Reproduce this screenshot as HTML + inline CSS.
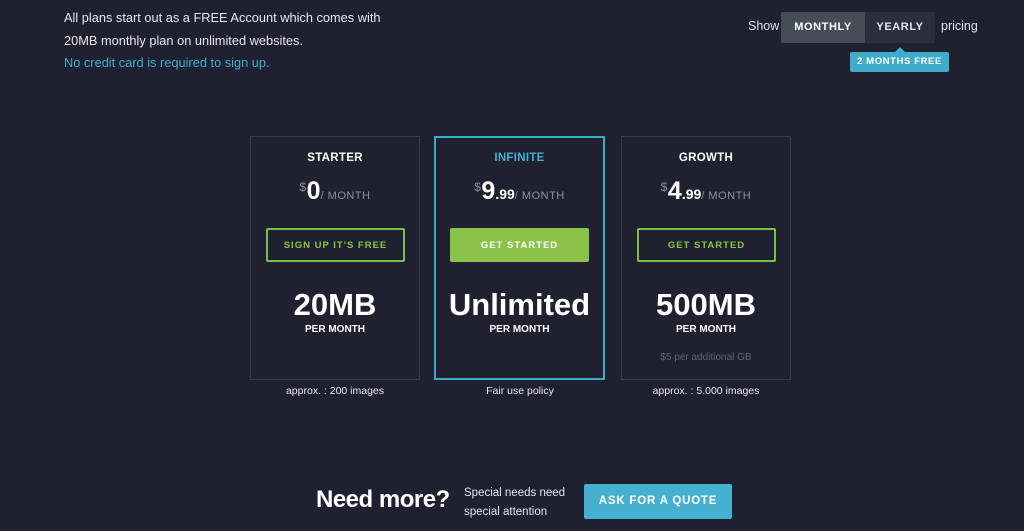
<!DOCTYPE html>
<html><head><style>
*{margin:0;padding:0;box-sizing:border-box}
body{width:1024px;height:531px;background:#1f2130;font-family:"Liberation Sans",sans-serif;color:#fff;position:relative;overflow:hidden}
.a{position:absolute}
.intro{left:64px;top:7px;font-size:12.8px;line-height:22.5px;color:#e8e9ec}
.intro .b{color:#3fb0d2}
.card{top:136px;width:170px;height:244px;border:1px solid #363a4a;text-align:center}
.card.inf{border:2px solid #39adc8}
.t{position:absolute;top:15px;left:0;right:0;font-size:11.5px;font-weight:bold;letter-spacing:.3px}
.p{position:absolute;top:40px;left:0;right:0;font-size:11px;color:#8d909b;letter-spacing:.5px}
.p sup{font-size:12px;vertical-align:8px}
.p b{font-size:25px;color:#fff;font-weight:bold;letter-spacing:0}
.p b small{font-size:14px}
.btn{position:absolute;top:91px;left:15px;width:139px;height:34px;border:2px solid #7cbf42;color:#8cc63f;font-size:9.5px;font-weight:bold;letter-spacing:1px;line-height:31px;border-radius:2px}
.btn.f{background:#8bc34a;color:#fff;border-color:#8bc34a}
.v{position:absolute;top:150px;left:0;right:0;font-size:31px;font-weight:bold}
.pm{position:absolute;top:187px;left:0;right:0;font-size:10px;font-weight:bold}
.ex{position:absolute;top:215px;left:0;right:0;font-size:10px;color:#5f6373}
.below{top:385px;width:170px;text-align:center;font-size:10.5px;color:#e8e9ec}
</style></head><body>
<div class="a intro">All plans start out as a FREE Account which comes with<br>20MB monthly plan on unlimited websites.<br><span class="b">No credit card is required to sign up.</span></div>
<div class="a" style="left:748px;top:19px;font-size:12.5px;color:#e0e2e6">Show</div>
<div class="a" style="left:781px;top:12px;width:84px;height:31px;background:#474d57;border-radius:2px 0 0 2px;font-size:11px;font-weight:bold;letter-spacing:.6px;line-height:31px;text-align:center">MONTHLY</div>
<div class="a" style="left:865px;top:12px;width:70px;height:31px;background:#2b2e3d;border-radius:0 2px 2px 0;font-size:11px;font-weight:bold;letter-spacing:.6px;line-height:31px;text-align:center;color:#e6e7ea">YEARLY</div>
<div class="a" style="left:941px;top:19px;font-size:12.5px;color:#e0e2e6">pricing</div>
<div class="a" style="left:895px;top:47px;width:0;height:0;border-left:5px solid transparent;border-right:5px solid transparent;border-bottom:5px solid #3fadc9"></div>
<div class="a" style="left:850px;top:52px;width:99px;height:20px;background:#3fadc9;border-radius:2px;font-size:9.5px;font-weight:bold;letter-spacing:.6px;line-height:20px;text-align:center">2 MONTHS FREE</div>

<div class="a card" style="left:250px">
<div class="t">STARTER</div>
<div class="p"><sup>$</sup><b>0</b>/ MONTH</div>
<div class="btn">SIGN UP IT'S FREE</div>
<div class="v">20MB</div>
<div class="pm">PER MONTH</div>
</div>
<div class="a card inf" style="left:434px;width:171px">
<div class="t" style="top:14px;color:#3fb0d2">INFINITE</div>
<div class="p" style="top:39px"><sup>$</sup><b>9<small>.99</small></b>/ MONTH</div>
<div class="btn f" style="top:90px;left:14px">GET STARTED</div>
<div class="v" style="top:149px">Unlimited</div>
<div class="pm" style="top:186px">PER MONTH</div>
</div>
<div class="a card" style="left:621px">
<div class="t">GROWTH</div>
<div class="p"><sup>$</sup><b>4<small>.99</small></b>/ MONTH</div>
<div class="btn">GET STARTED</div>
<div class="v">500MB</div>
<div class="pm">PER MONTH</div>
<div class="ex">$5 per additional GB</div>
</div>
<div class="a below" style="left:250px">approx. : 200 images</div>
<div class="a below" style="left:435px">Fair use policy</div>
<div class="a below" style="left:621px">approx. : 5.000 images</div>

<div class="a" style="left:316px;top:486px;font-size:24px;font-weight:bold;letter-spacing:-.5px">Need more?</div>
<div class="a" style="left:464px;top:484px;font-size:11.5px;line-height:19px;color:#e6e7ea">Special needs need<br>special attention</div>
<div class="a" style="left:584px;top:484px;width:148px;height:35px;background:#45b0cf;border-radius:2px;font-size:11.5px;font-weight:bold;letter-spacing:.8px;line-height:35px;text-align:center">ASK FOR A QUOTE</div>
</body></html>
